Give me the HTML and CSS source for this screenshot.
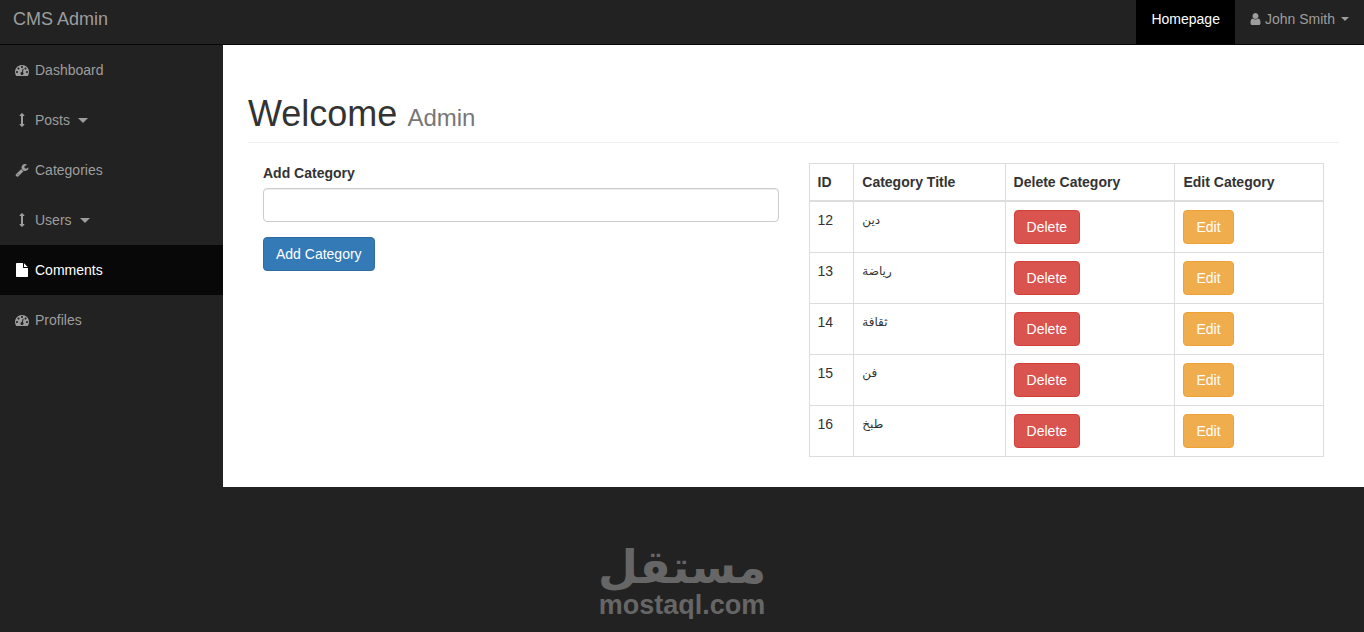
FILE: index.html
```
<!DOCTYPE html>
<html lang="en">
<head>
    <meta charset="UTF-8">
    <meta name="viewport" content="width=device-width, initial-scale=1.0">
    <title>CMS Admin</title>
    <link rel="stylesheet" href="styles.css">
</head>
<body>
    <!-- Icons -->
    <svg class="sprite" aria-hidden="true">
        <symbol id="dashboard" viewBox="0 0 1792 1792"><path d="M384 1152q0-53-37.5-90.5t-90.5-37.5-90.5 37.5-37.5 90.5 37.5 90.5 90.5 37.5 90.5-37.5 37.5-90.5zm192-448q0-53-37.5-90.5t-90.5-37.5-90.5 37.5-37.5 90.5 37.5 90.5 90.5 37.5 90.5-37.5 37.5-90.5zm428 481l101-382q6-26-7.5-48.5t-38.5-29.5-48 6.5-30 39.5l-101 382q-60 5-107 43.5t-63 98.5q-20 77 20 146t117 89 146-20 89-117q16-60-6-117t-72-91zm660-33q0-53-37.5-90.5t-90.5-37.5-90.5 37.5-37.5 90.5 37.5 90.5 90.5 37.5 90.5-37.5 37.5-90.5zm-640-640q0-53-37.5-90.5t-90.5-37.5-90.5 37.5-37.5 90.5 37.5 90.5 90.5 37.5 90.5-37.5 37.5-90.5zm448 192q0-53-37.5-90.5t-90.5-37.5-90.5 37.5-37.5 90.5 37.5 90.5 90.5 37.5 90.5-37.5 37.5-90.5zm320 448q0 261-141 483-19 29-54 29h-1402q-35 0-54-29-141-221-141-483 0-182 71-348t191-286 286-191 348-71 348 71 286 191 191 286 71 348z"/></symbol>
        <symbol id="arrows" viewBox="0 0 1792 1792"><path d="M1216 320q0 26-19 45t-45 19h-128v1024h128q26 0 45 19t19 45-19 45l-256 256q-19 19-45 19t-45-19l-256-256q-19-19-19-45t19-45 45-19h128v-1024h-128q-26 0-45-19t-19-45 19-45l256-256q19-19 45-19t45 19l256 256q19 19 19 45z"/></symbol>
        <symbol id="wrench" viewBox="0 0 1792 1792"><path d="M448 1472q0-26-19-45t-45-19-45 19-19 45 19 45 45 19 45-19 19-45zm644-420l-682 682q-37 37-90 37-52 0-91-37l-106-108q-38-36-38-90 0-53 38-91l681-681q39 98 114.5 173.5t173.5 114.5zm634-435q0 39-23 106-47 134-164.5 217.5t-258.5 83.5q-185 0-316.5-131.5t-131.5-316.5 131.5-316.5 316.5-131.5q58 0 121.5 16.5t107.5 46.5q16 11 16 28t-16 28l-293 169v224l193 107q5-3 79-48.5t135.5-81 70.5-35.5q15 0 23.5 10t8.5 25z"/></symbol>
        <symbol id="file" viewBox="0 0 1792 1792"><path d="M1152 512v-472q22 14 36 28l408 408q14 14 28 36h-472zm-128 32q0 40 28 68t68 28h544v1056q0 40-28 68t-68 28h-1344q-40 0-68-28t-28-68v-1600q0-40 28-68t68-28h800v544z"/></symbol>
        <symbol id="user" viewBox="192 0 1408 1792"><path d="M1536 1399q0 109-62.5 187t-150.5 78h-854q-88 0-150.5-78t-62.5-187q0-85 8.5-160.5t31.5-152 58.5-131 94-89 134.5-34.5q131 128 313 128t313-128q76 0 134.5 34.5t94 89 58.5 131 31.5 152 8.5 160.5zm-256-887q0 159-112.5 271.5t-271.5 112.5-271.5-112.5-112.5-271.5 112.5-271.5 271.5-112.5 271.5 112.5 112.5 271.5z"/></symbol>
    </svg>

    <!-- Navigation -->
    <nav class="navbar">
        <a class="brand" href="#">CMS Admin</a>
        <ul class="top-nav">
            <li><a class="home" href="#">Homepage</a></li>
            <li><a href="#"><svg class="icon"><use href="#user"/></svg>John Smith <b class="caret"></b></a></li>
        </ul>
    </nav>

    <div class="wrapper">
        <ul class="side-nav">
            <li><a href="#"><svg class="icon"><use href="#dashboard"/></svg>Dashboard</a></li>
            <li><a href="#"><svg class="icon"><use href="#arrows"/></svg>Posts <b class="caret"></b></a></li>
            <li><a href="#"><svg class="icon"><use href="#wrench"/></svg>Categories</a></li>
            <li><a href="#"><svg class="icon"><use href="#arrows"/></svg>Users <b class="caret"></b></a></li>
            <li class="active"><a href="#"><svg class="icon"><use href="#file"/></svg>Comments</a></li>
            <li><a href="#"><svg class="icon"><use href="#dashboard"/></svg>Profiles</a></li>
        </ul>

        <main class="page">
            <h1 class="page-header">Welcome <small>Admin</small></h1>
            <div class="row">
                <form class="col">
                    <label for="cat_title">Add Category</label>
                    <input class="form-control" type="text" id="cat_title" name="cat_title">
                    <button class="btn btn-primary" type="submit">Add Category</button>
                </form>

                <div class="col">
                    <table class="table">
                        <thead>
                            <tr>
                                <th>ID</th>
                                <th>Category Title</th>
                                <th>Delete Category</th>
                                <th>Edit Category</th>
                            </tr>
                        </thead>
                        <tbody>
                            <tr>
                                <td>12</td>
                                <td class="title" lang="ar">دين</td>
                                <td><a class="btn btn-danger" href="#">Delete</a></td>
                                <td><a class="btn btn-warning" href="#">Edit</a></td>
                            </tr>
                            <tr>
                                <td>13</td>
                                <td class="title" lang="ar">رياضة</td>
                                <td><a class="btn btn-danger" href="#">Delete</a></td>
                                <td><a class="btn btn-warning" href="#">Edit</a></td>
                            </tr>
                            <tr>
                                <td>14</td>
                                <td class="title" lang="ar">ثقافة</td>
                                <td><a class="btn btn-danger" href="#">Delete</a></td>
                                <td><a class="btn btn-warning" href="#">Edit</a></td>
                            </tr>
                            <tr>
                                <td>15</td>
                                <td class="title" lang="ar">فن</td>
                                <td><a class="btn btn-danger" href="#">Delete</a></td>
                                <td><a class="btn btn-warning" href="#">Edit</a></td>
                            </tr>
                            <tr>
                                <td>16</td>
                                <td class="title" lang="ar">طبخ</td>
                                <td><a class="btn btn-danger" href="#">Delete</a></td>
                                <td><a class="btn btn-warning" href="#">Edit</a></td>
                            </tr>
                        </tbody>
                    </table>
                </div>
            </div>
        </main>
    </div>

    <footer class="mark">
        <span class="mark-ar" lang="ar">مستقل</span>
        <span class="mark-en">mostaql.com</span>
    </footer>
</body>
</html>
```
FILE: styles.css
```
* {
    box-sizing: border-box;
}
body {
    margin: 0;
    background-color: #222;
    color: #333;
    font-family: "Liberation Sans", Arial, sans-serif;
    font-size: 14px;
    line-height: 20px;
}
a {
    text-decoration: none;
}
ul {
    list-style: none;
    margin: 0;
    padding: 0;
}
.sprite {
    display: none;
}
.icon {
    width: 14px;
    height: 14px;
    fill: currentColor;
}
.caret {
    border-top: 4px solid;
    border-left: 4px solid transparent;
    border-right: 4px solid transparent;
}

/* top bar */
.navbar {
    display: flex;
    justify-content: space-between;
    height: 45px;
    border-bottom: 1px solid #080808;
}
.brand {
    padding: 9px 13px;
    color: #9d9d9d;
    font-size: 18px;
}
.top-nav {
    display: flex;
}
.top-nav a {
    display: flex;
    align-items: center;
    height: 44px;
    padding: 0 15px 6px;
    color: #9d9d9d;
}
.top-nav .icon {
    width: 11px;
    margin-right: 4px;
}
.top-nav .caret {
    margin-left: 6px;
}
.top-nav .home {
    background-color: #000;
    color: #fff;
}

/* sidebar */
.wrapper {
    display: flex;
}
.side-nav {
    width: 223px;
    flex: none;
}
.side-nav a {
    display: flex;
    align-items: center;
    height: 50px;
    padding: 0 15px;
    color: #9d9d9d;
}
.side-nav .icon {
    margin-right: 6px;
}
.side-nav .caret {
    margin-left: 8px;
    border-width: 5px 5px 0;
}
.side-nav .active a {
    background-color: #080808;
    color: #fff;
}

/* content */
.page {
    flex: 1;
    padding: 49px 25px 30px;
    background-color: #fff;
}
.page-header {
    margin: 0 0 20px;
    padding-bottom: 8px;
    border-bottom: 1px solid #eee;
    font-size: 36px;
    font-weight: 500;
    line-height: 40px;
}
.page-header small {
    color: #777;
    font-size: 24px;
    font-weight: 400;
    line-height: 24px;
}
.row {
    display: flex;
}
.col {
    flex: 1;
    padding: 0 15px;
}
label {
    display: block;
    margin-bottom: 5px;
    font-weight: bold;
}
.form-control {
    display: block;
    width: 100%;
    height: 34px;
    margin-bottom: 15px;
    padding: 6px 12px;
    border: 1px solid #ccc;
    border-radius: 4px;
    font: inherit;
    color: #555;
    box-shadow: inset 0 1px 1px rgba(0, 0, 0, .075);
}
.btn {
    display: inline-block;
    padding: 6px 12px;
    border: 1px solid transparent;
    border-radius: 4px;
    color: #fff;
    font: inherit;
    vertical-align: middle;
    cursor: pointer;
}
.btn-primary {
    background-color: #337ab7;
    border-color: #2e6da4;
}
.btn-danger {
    background-color: #d9534f;
    border-color: #d43f3a;
}
.btn-warning {
    background-color: #f0ad4e;
    border-color: #eea236;
}
.table {
    width: 100%;
    border-collapse: collapse;
    border: 1px solid #ddd;
}
.table th, .table td {
    padding: 8px;
    border: 1px solid #ddd;
    text-align: left;
    vertical-align: top;
}
.table th {
    border-bottom-width: 2px;
}
.table .title {
    font-family: "Liberation Sans", "DejaVu Sans", sans-serif;
    font-size: 12px;
}

/* footer logo */
.mark {
    display: flex;
    flex-direction: column;
    align-items: center;
    padding-top: 56px;
    color: #666;
    font-weight: bold;
}
.mark-ar {
    font-family: "DejaVu Sans", sans-serif;
    font-size: 46px;
    line-height: 48px;
}
.mark-en {
    font-size: 27px;
    line-height: 28px;
}
```
